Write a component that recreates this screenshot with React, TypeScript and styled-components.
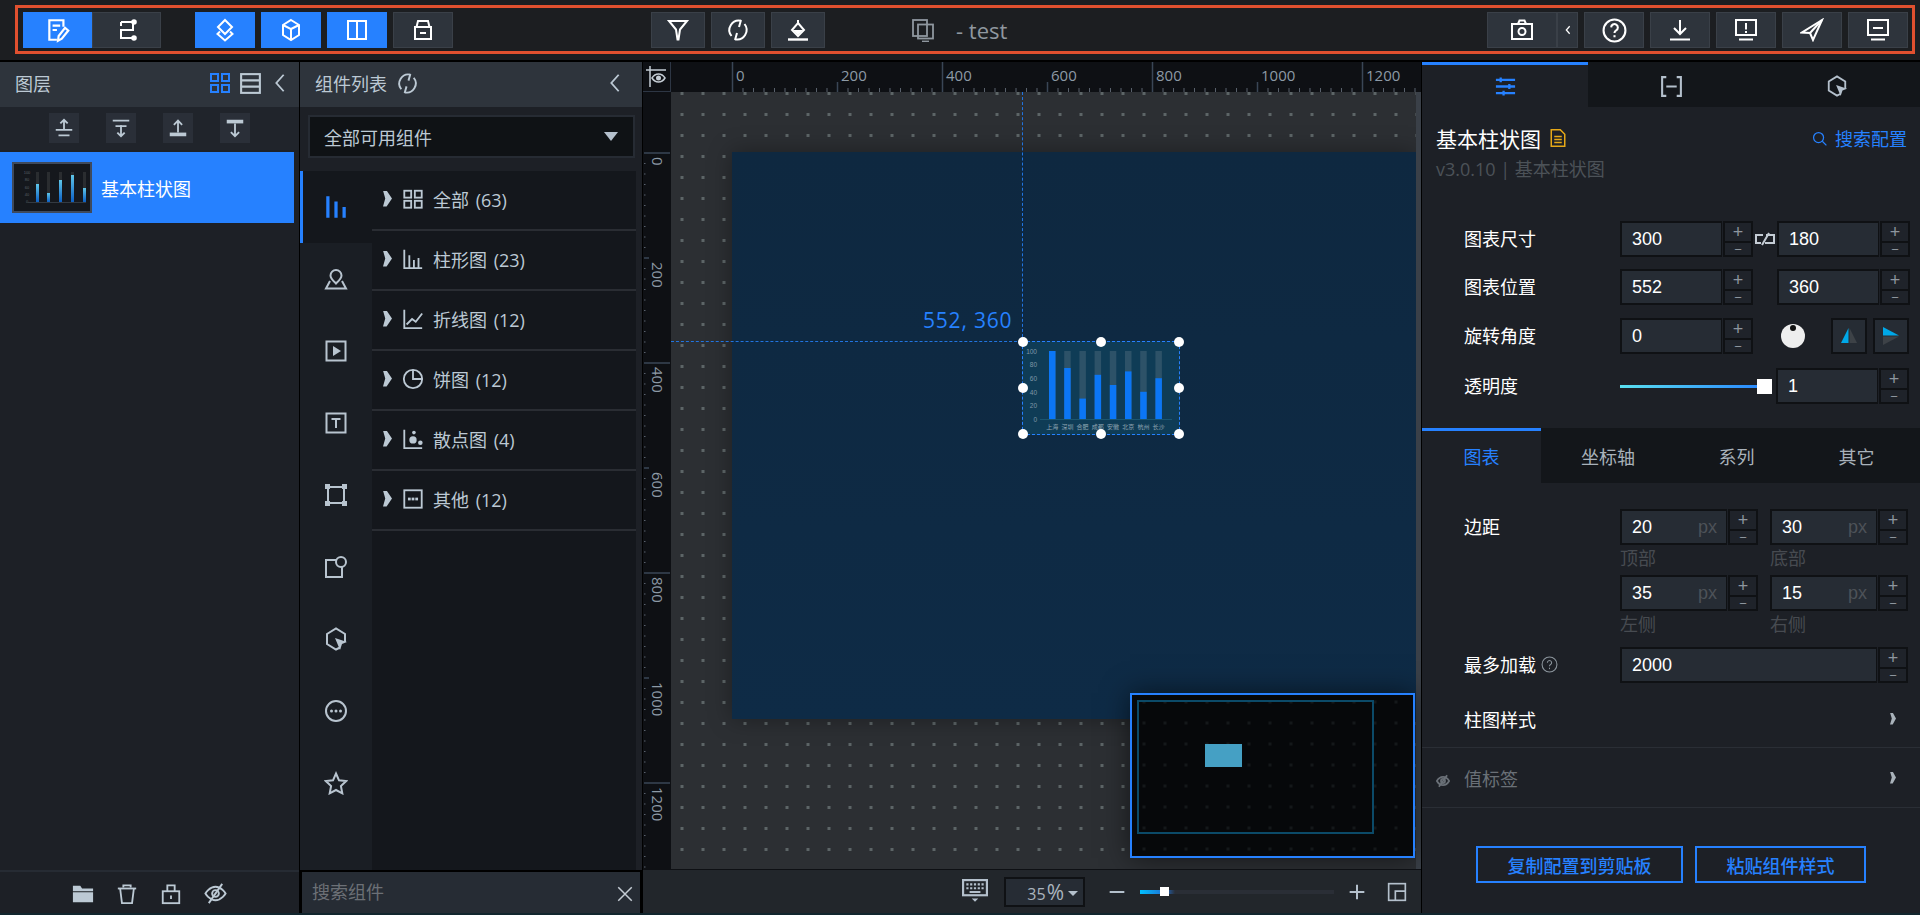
import React from 'react';
import styled, { createGlobalStyle } from 'styled-components';

const GlobalStyle = createGlobalStyle`
  html, body { margin: 0; padding: 0; width: 1920px; height: 915px; overflow: hidden; background: #000; }
  #root { width: 1920px; height: 915px; }
  * { box-sizing: border-box; }
`;

const BLUE = '#2681ff';
const FONT = `"Open Sans", "Noto Sans CJK SC", sans-serif`;
const NUM = `"Liberation Sans", "Noto Sans CJK SC", sans-serif`;

/* ---------- icon ---------- */
const Svg = styled.svg<{ $w: number; $h?: number; $c?: string; $sw?: number }>`
  display: block;
  flex: none;
  width: ${p => p.$w}px;
  height: ${p => p.$h ?? p.$w}px;
  color: ${p => p.$c ?? 'currentColor'};
  fill: none;
  stroke: currentColor;
  stroke-width: ${p => p.$sw ?? 2};
`;

const icons: Record<string, React.ReactNode> = {
  edit: <><path d="M17 9V3H4v18h7" /><path d="M7 8h7M7 12h4" /><path d="M12 22l.6-4.500L18.500 10l3 2.500-6 7.500z" /></>,
  flow: <><path d="M6 4h12v8H6v8h12" /><circle cx="19" cy="4" r="1.800" fill="currentColor" /><circle cx="19" cy="20" r="1.800" fill="currentColor" /><path d="M6 4v4" /></>,
  layers: <><path d="M12 2l7 7-7 7-7-7z" /><path d="M7 13.500L4.500 16 12 22.500l7.500-6.500-2.500-2.500" /></>,
  cube: <><path d="M12 2l8 5v10l-8 5-8-5V7z" /><path d="M4 7l8 4v11M12 11l8-4" /></>,
  panel: <><rect x="3" y="3" width="18" height="18" /><path d="M12 3v18" /></>,
  archive: <><path d="M7 3h10l1.500 6H5.500z" /><path d="M4 9h16v12H4z" /><path d="M9 15h6" /></>,
  funnel: <path d="M3 3h18l-7 8.500-1.500 10h-1L10 11.500z" />,
  refresh: <><path d="M5.500 18A9.500 9.500 0 0 1 15 2.800" /><path d="M18.500 6A9.500 9.500 0 0 1 9 21.200" /><path d="M15 2l-2 7M9 22l2-7" /></>,
  bucket: <><path d="M12 2v3M12 5l6 7-6 6-6-6z" /><path fill="currentColor" stroke="none" d="M7 12h10l-5 5z" /><path d="M2 21.500h20" strokeWidth="2.400" /></>,
  devices: <><rect x="2" y="2" width="14" height="16" /><rect x="7" y="6.500" width="15" height="14" /><path d="M11 23.500h7" /></>,
  camera: <><path d="M8 6l1.500-3.500h5L16 6" /><rect x="2" y="6" width="20" height="15" /><circle cx="12" cy="13.500" r="3.500" /></>,
  help: <><circle cx="12" cy="12" r="10.500" /><path d="M8.800 9a3.200 3.200 0 1 1 4.800 2.800c-1 .6-1.600 1.300-1.600 2.600" /><path d="M12 16.500v2" /></>,
  download: <><path d="M12 2v14M6 10l6 6 6-6" /><path d="M2 21.500h20" /></>,
  screenAlert: <><rect x="2" y="2" width="20" height="15" /><path d="M12 5v6.500M12 13v2" /><path d="M5 21.500h14" /></>,
  send: <><path d="M22 2L2 14.500l8 .5 3 7z" /><path d="M22 2L10 15" /></>,
  screenMinus: <><rect x="2" y="2" width="20" height="15" /><path d="M7 10h10" /><path d="M5 21.500h14" /></>,
  grid4: <><rect x="3" y="3" width="7" height="7" /><rect x="14" y="3" width="7" height="7" /><rect x="3" y="14" width="7" height="7" /><rect x="14" y="14" width="7" height="7" /></>,
  list3: <><rect x="3" y="3" width="18" height="18" /><path d="M3 9h18M3 15h18" /></>,
  chevLeft: <path d="M16 3l-8 9 8 9" />,
  moveUp: <><path d="M12 14V3M8 7l4-4 4 4" /><path d="M3 14h18M6 20h12" /></>,
  moveDown: <><path d="M3 4h18M6 10h12" /><path d="M12 9v12M8 17l4 4 4-4" /></>,
  toTop: <><path d="M12 17V4M7.500 8.500L12 4l4.500 4.500" /><path d="M3 19h18" strokeWidth="4" /></>,
  toBottom: <><path d="M3 5h18" strokeWidth="4" /><path d="M12 7v14M7.500 16.500L12 21l4.500-4.500" /></>,
  bars: <path stroke="none" fill="currentColor" d="M3 2h3v20H3zM10.500 7h3v15h-3zM18 12h3v10h-3z" />,
  pin: <><path d="M12 3a5.500 5.500 0 0 0-5.500 5.500c0 3 3 5.500 5.500 8 2.500-2.500 5.500-5 5.500-8A5.500 5.500 0 0 0 12 3z" /><path d="M6 14l-4 7.500h20l-4-7.500" /></>,
  play: <><rect x="2.500" y="2.500" width="19" height="19" /><path stroke="none" fill="currentColor" d="M9 7l8 5-8 5z" /></>,
  textBox: <><rect x="2.500" y="2.500" width="19" height="19" /><path d="M7.500 8h9M12 8v9" /></>,
  bounds: <><path d="M6 4h12M6 20h12M4 6v12M20 6v12" /><g stroke="none" fill="currentColor"><rect x="1" y="1" width="5" height="5" /><rect x="18" y="1" width="5" height="5" /><rect x="1" y="18" width="5" height="5" /><rect x="18" y="18" width="5" height="5" /></g></>,
  shapes: <><rect x="2" y="5" width="16" height="17" /><circle cx="17" cy="7" r="5" fill="#1a1e24" /></>,
  hexPointer: <><path d="M16 20.500l-4 2-9-5.500V7l9-5.500L21 7v8" /><path fill="currentColor" stroke="none" d="M11 11l12 4-5 2-2 6z" /></>,
  dots: <><circle cx="12" cy="12" r="10" /><g stroke="none" fill="currentColor"><circle cx="7.500" cy="12" r="1.500" /><circle cx="12" cy="12" r="1.500" /><circle cx="16.500" cy="12" r="1.500" /></g></>,
  star: <path d="M12 2.500l3 6.800 7.200.8-5.300 4.900 1.400 7.300L12 19l-6.300 3.300 1.400-7.300L1.800 10.100 9 9.300z" />,
  all: <><rect x="2.500" y="3" width="7.500" height="7.500" /><rect x="14" y="3" width="7.500" height="7.500" /><rect x="2.500" y="14" width="7.500" height="7.500" /><rect x="14" y="14" width="7.500" height="7.500" /></>,
  barChart: <><path d="M2.500 2v20h19.500" /><path d="M8 8v14M13 13v9M18 11v11" /></>,
  lineChart: <><path d="M2.500 2v20h19.500" /><path d="M5 18l6-6 4 3 7-9" /></>,
  pie: <><circle cx="12" cy="12" r="10" /><path d="M12 2v10h10" /></>,
  scatter: <><path d="M2.500 2v20h19.500" /><g stroke="none" fill="currentColor"><circle cx="12" cy="13" r="4" /><circle cx="20" cy="16" r="2.500" /><circle cx="13" cy="5" r="2" /></g></>,
  other: <><rect x="2.500" y="2.500" width="19" height="19" /><g stroke="none" fill="currentColor"><rect x="6.500" y="10.500" width="3" height="3" /><rect x="10.500" y="10.500" width="3" height="3" /><rect x="14.500" y="10.500" width="3" height="3" /></g></>,
  folder: <path stroke="none" fill="currentColor" d="M1 3h8l2 3h12v3H1zM1 10h22v11H1z" />,
  trash: <><path d="M2 6h20" /><path d="M8 5V2.500h8V5" /><path d="M4.500 6l2 16h11l2-16" /></>,
  lock: <><path d="M8 9V2.500h8V9" /><rect x="3" y="9" width="18" height="13" /><path d="M12 13.500v4" /></>,
  eyeOff: <><path d="M1.500 12s4-7 10.500-7 10.500 7 10.500 7-4 7-10.500 7S1.500 12 1.500 12z" /><circle cx="12" cy="12" r="3.500" /><path d="M5 22L19 2" /></>,
  close: <path d="M3 3l18 18M21 3L3 21" />,
  search: <><circle cx="10.500" cy="10.500" r="8" /><path d="M16.500 16.500L23 23" /></>,
  doc: <><path d="M3 1h12l6 6v16H3z" /><path d="M7 10h10M7 14h10M7 18h10" /></>,
  keyboard: <><rect x="1" y="1" width="22" height="14" /><path stroke="none" fill="currentColor" d="M4 4h2v2H4zM7.500 4h2v2h-2zM11 4h2v2h-2zM14.500 4h2v2h-2zM18 4h2v2h-2zM4 7.500h2v2H4zM7.500 7.500h2v2h-2zM11 7.500h2v2h-2zM14.500 7.500h2v2h-2zM18 7.500h2v2h-2zM7 11h10v2H7zM9 18h6l-3 3z" /></>,
  layout: <><rect x="2" y="2" width="20" height="20" /><path d="M10 22V11h12" /></>,
  questionSmall: <><circle cx="12" cy="12" r="10.500" /><path d="M9 9.500a3 3 0 1 1 4.500 2.600c-1 .6-1.500 1.200-1.500 2.400" /><path d="M12 16.500v2" /></>,
  sliders: <path d="M2 5h20M2 12h20M2 19h20M7 2.500v5M16 9.500v5M10 16.500v5" strokeWidth="2.400" />,
  bracket: <path d="M7 3H3v18h4M17 3h4v18h-4M7 12h10" />,
  rulerEye: <><path d="M1 5h20M5 1v21" strokeWidth="1.500" /><path d="M7 13s2.500-4 6.500-4 6.500 4 6.500 4-2.500 4-6.500 4S7 13 7 13z" strokeWidth="1.500" /><circle cx="13.500" cy="13" r="1.500" fill="currentColor" /></>,
  minus: <path d="M1 12h22" />,
  plus: <path d="M1 12h22M12 1v22" />,
};

const Icon = ({ n, s = 24, h, c, w }: { n: string; s?: number; h?: number; c?: string; w?: number }) => (
  <Svg $w={s} $h={h} $c={c} $sw={w} viewBox="0 0 24 24" preserveAspectRatio="xMidYMid meet">{icons[n]}</Svg>
);

/* ---------- page ---------- */
const Page = styled.div`
  width: 1920px;
  height: 915px;
  display: flex;
  flex-direction: column;
  font-family: ${FONT};
  background: #000;
`;

/* ---------- header ---------- */
const HeaderBar = styled.header`
  height: 60px;
  flex: none;
  background: #1c1e21;
  padding: 5px 5px 6px 15px;
`;
const HeaderFrame = styled.div`
  height: 49px;
  border: 3px solid #e0502f;
  padding: 1px 4px 0 5px;
  display: flex;
  align-items: center;
`;
const HGroup = styled.div<{ $ml?: number; $gap?: number }>`
  display: flex;
  gap: ${p => p.$gap ?? 6}px;
  margin-left: ${p => p.$ml ?? 0}px;
`;
const HBtn = styled.button<{ $w?: number; $on?: boolean }>`
  width: ${p => p.$w ?? 60}px;
  height: 36px;
  padding: 0;
  display: flex;
  align-items: center;
  justify-content: center;
  color: #fff;
  background: ${p => (p.$on ? BLUE : '#2e343c')};
  border: 1px solid ${p => (p.$on ? BLUE : '#3a4048')};
`;
const Segment = styled.div`
  display: flex;
`;
const ProjectTitle = styled.div`
  display: flex;
  align-items: center;
  margin-left: 86px;
  color: #8f979f;
  font-size: 22px;
  gap: 21px;
  flex: 1;
`;

/* ---------- body ---------- */
const Body = styled.div`
  flex: none;
  height: 851px;
  margin-top: 2px;
  display: flex;
  background: #000;
`;
const BottomStrip = styled.div`
  height: 2px;
  background: #12262e;
`;

const PanelHead = styled.div`
  height: 45px;
  flex: none;
  background: #2e343c;
  color: #bcc9d4;
  font-size: 18px;
  display: flex;
  align-items: center;
  padding-bottom: 3px;
`;

/* left */
const LayerPanel = styled.aside`
  width: 299px;
  flex: none;
  display: flex;
  flex-direction: column;
  background: #1d2026;
`;
const LayerHead = styled(PanelHead)`
  padding-left: 15px;
  padding-right: 8px;
`;
const HeadTitle = styled.span`
  flex: 1;
`;
const HeadIcons = styled.div`
  display: flex;
  align-items: center;
  gap: 6px;
`;
const LayerTools = styled.div`
  height: 43px;
  flex: none;
  background: #20242b;
  display: flex;
  justify-content: center;
  padding: 6px 0 0 0;
  gap: 27px;
`;
const LayerTool = styled.div`
  width: 30px;
  height: 30px;
  background: #2a2f38;
  color: #bcc9d4;
  display: flex;
  align-items: center;
  justify-content: center;
`;
const LayerList = styled.div`
  flex: 1;
  padding: 2px 5px 0 0;
`;
const LayerItem = styled.div`
  height: 71px;
  background: ${BLUE};
  display: flex;
  align-items: center;
  padding-left: 12px;
  gap: 9px;
  color: #fff;
  font-size: 18px;
`;
const Thumb = styled.svg`
  width: 80px;
  height: 51px;
  display: block;
  border: 2px solid #3f4a5c;
  background: #15181d;
`;
const LayerFoot = styled.div`
  height: 43px;
  flex: none;
  border-top: 2px solid #262b33;
  display: flex;
  align-items: center;
  justify-content: center;
  gap: 22px;
  color: #bcc9d4;
  padding-top: 2px;
`;

/* middle */
const ComPanel = styled.section`
  width: 342px;
  margin-left: 1px;
  flex: none;
  display: flex;
  flex-direction: column;
  background: #1d2026;
`;
const ComHead = styled(PanelHead)`
  padding-left: 15px;
  padding-right: 16px;
  gap: 9px;
`;
const SelectBox = styled.div`
  height: 43px;
  margin: 8px 7px 13px 8px;
  flex: none;
  background: #0f1215;
  border: 2px solid #262b33;
  color: #bcc9d4;
  font-size: 18px;
  display: flex;
  align-items: center;
  justify-content: space-between;
  padding: 0 15px 0 14px;
`;
const Caret = styled.i`
  width: 0;
  height: 0;
  border-left: 7px solid transparent;
  border-right: 7px solid transparent;
  border-top: 9px solid #b4c0cc;
`;
const ComBody = styled.div`
  height: 699px;
  flex: none;
  display: flex;
  padding-right: 6px;
`;
const SideCol = styled.div`
  width: 72px;
  flex: none;
  background: #1a1e24;
  color: #b8c4cf;
`;
const SideTab = styled.div<{ $on?: boolean }>`
  height: 72px;
  display: flex;
  align-items: center;
  justify-content: center;
  color: ${p => (p.$on ? BLUE : 'inherit')};
  background: ${p => (p.$on ? '#14171c' : 'transparent')};
  border-left: 3px solid ${p => (p.$on ? BLUE : 'transparent')};
  padding-right: 3px;
`;
const CatList = styled.div`
  flex: 1;
  background: #14171c;
`;
const CatRow = styled.div`
  height: 60px;
  border-bottom: 2px solid #2a2d33;
  display: flex;
  align-items: center;
  color: #bcc9d4;
  font-size: 18px;
  word-spacing: 2px;
  padding: 0 0 3px 11px;
`;
const CatIcon = styled.span`
  margin: 0 9px 0 10px;
  color: #bcc9d4;
`;
const SearchWrap = styled.div`
  height: 43px;
  flex: none;
  background: #000;
  padding: 2px 2px 0 2px;
`;
const SearchBox = styled.div`
  height: 41px;
  background: #262c34;
  color: #6c7076;
  font-size: 18px;
  display: flex;
  align-items: center;
  justify-content: space-between;
  padding: 0 6px 0 10px;
`;
const SearchText = styled.span`
  margin-top: -3px;
`;
const SearchClose = styled.span`
  margin-top: 3px;
`;

/* canvas column */
const Workspace = styled.main`
  width: 778px;
  flex: none;
  margin-left: 1px;
  display: flex;
  flex-direction: column;
  background: #0e1014;
`;
const RulerRow = styled.div`
  height: 30px;
  flex: none;
  display: flex;
`;
const RulerCorner = styled.div`
  width: 28px;
  flex: none;
  border-right: 1px solid #2d3644;
  border-bottom: 1px solid #2d3644;
  color: #c4ccd4;
  display: flex;
  align-items: center;
  justify-content: center;
`;
const CanvasRow = styled.div`
  flex: 1;
  min-height: 0;
  display: flex;
`;
const RulerSvg = styled.svg`
  display: block;
  flex: none;
  background: #0e1014;
  font-family: "Open Sans", sans-serif;
`;
const Canvas = styled.div`
  position: relative;
  width: 750px;
  flex: none;
  overflow: hidden;
  background-color: #2c2f33;
  background-image: radial-gradient(circle, #5d6567 1.5px, transparent 1.8px);
  background-size: 21px 21px;
  background-position: 0.5px -9px;
  padding: 60px 0 0 61px;
`;
const Stage = styled.div`
  width: 684px;
  height: 567px;
  background: linear-gradient(180deg, #0e2840 0%, #0e2b46 100%);
  box-shadow: 0 0 22px rgba(0, 0, 0, 0.35);
`;
const ScrollBar = styled.div`
  position: absolute;
  top: 0;
  bottom: 0;
  right: 0;
  width: 5px;
  background: #3a4048;
`;
const GuideV = styled.div`
  position: absolute;
  left: 351px;
  top: 0;
  height: 250px;
  border-left: 1px dashed #2174e0;
`;
const GuideH = styled.div`
  position: absolute;
  left: 0;
  top: 249px;
  width: 351px;
  border-top: 1px dashed #2174e0;
`;
const CoordLabel = styled.div`
  position: absolute;
  left: 252px;
  top: 214px;
  color: ${BLUE};
  font-size: 21px;
  letter-spacing: 0.8px;
  line-height: 28px;
  white-space: nowrap;
`;
const Selection = styled.div`
  position: absolute;
  left: 351px;
  top: 249px;
  width: 158px;
  height: 94px;
  background: #0f3c56;
  border: 1px dashed ${BLUE};
`;
const ChartSvg = styled.svg`
  position: absolute;
  left: -1px;
  top: -1px;
  width: 157px;
  height: 94px;
  font-family: "Liberation Sans", "Noto Sans CJK SC", sans-serif;
`;
const Handle = styled.i<{ $x: number; $y: number }>`
  position: absolute;
  left: ${p => p.$x}%;
  top: ${p => p.$y}%;
  width: 10px;
  height: 10px;
  margin: -5px 0 0 -5px;
  border-radius: 50%;
  background: #fff;
`;
const MiniMap = styled.div`
  position: absolute;
  right: 6px;
  bottom: 11px;
  width: 285px;
  height: 165px;
  border: 2px solid ${BLUE};
  background-color: #06080a;
  background-image: radial-gradient(circle, #14181a 1.5px, transparent 1.8px);
  background-size: 21px 21px;
  background-position: 1.5px -3.5px;
  padding: 5px;
  box-shadow: 0 0 26px rgba(0, 0, 0, 0.55);
`;
const MiniStage = styled.div`
  position: relative;
  width: 237px;
  height: 134px;
  border: 2px solid #0b4a68;
`;
const MiniBlock = styled.div`
  position: absolute;
  left: 66px;
  top: 42px;
  width: 37px;
  height: 23px;
  background: #45a0c4;
`;
const ZoomBar = styled.div`
  height: 43px;
  flex: none;
  margin-top: 1px;
  background: #22262b;
  color: #b4c0cc;
  display: flex;
  align-items: center;
  padding-left: 319px;
`;
const ZoomInput = styled.div`
  width: 81px;
  height: 30px;
  margin-left: 16px;
  margin-right: 24px;
  border: 2px solid #0f1114;
  background: #262c34;
  display: flex;
  align-items: center;
  justify-content: flex-end;
  padding-right: 5px;
  color: #aab4be;
  font-size: 16px;
  gap: 4px;
`;
const Pct = styled.span`
  font-size: 21px;
  margin-left: 1px;
`;
const MiniCaret = styled.i`
  width: 0;
  height: 0;
  margin-top: 3px;
  border-left: 5px solid transparent;
  border-right: 5px solid transparent;
  border-top: 5px solid #b4c0cc;
`;
const ZoomTrack = styled.div`
  position: relative;
  width: 194px;
  height: 4px;
  margin: 0 15px;
  background: #2a2e36;
`;
const ZoomFill = styled.div`
  position: absolute;
  inset: 0 auto 0 0;
  width: 35px;
  background: linear-gradient(90deg, #00c0ff, #1f6fd0 70%, transparent);
`;
const ZoomKnob = styled.i`
  position: absolute;
  left: 20px;
  top: -3px;
  width: 9px;
  height: 9px;
  background: #fff;
`;
const LayoutBtn = styled.span`
  margin-left: 22px;
`;

/* right */
const ConfigPanel = styled.aside`
  width: 498px;
  margin-left: 1px;
  flex: none;
  background: #1d2026;
  display: flex;
  flex-direction: column;
`;
const IconTabs = styled.div`
  display: flex;
  height: 45px;
  flex: none;
  background: #13161a;
`;
const IconTab = styled.div<{ $on?: boolean }>`
  flex: 1;
  display: flex;
  align-items: center;
  justify-content: center;
  color: ${p => (p.$on ? BLUE : '#b4c0cc')};
  background: ${p => (p.$on ? '#1d2026' : 'transparent')};
  border-top: 3px solid ${p => (p.$on ? BLUE : 'transparent')};
`;
const TitleBlock = styled.div`
  height: 114px;
  flex: none;
  padding: 16px 13px 0 14px;
`;
const TitleRow = styled.div`
  display: flex;
  align-items: center;
  justify-content: space-between;
  height: 30px;
`;
const TitleMain = styled.div`
  display: flex;
  align-items: center;
  gap: 8px;
  color: #fff;
  font-size: 21px;
`;
const SearchCfg = styled.div`
  display: flex;
  align-items: center;
  gap: 8px;
  color: ${BLUE};
  font-size: 18px;
`;
const Subtitle = styled.div`
  color: #4c5258;
  font-size: 18px;
  line-height: 26px;
  margin-top: 3px;
`;
const FormRow = styled.div<{ $mt?: number; $h?: number }>`
  display: flex;
  align-items: center;
  height: ${p => p.$h ?? 36}px;
  margin-top: ${p => p.$mt ?? 0}px;
  padding-left: 42px;
`;
const Label = styled.div`
  width: 156px;
  flex: none;
  color: #fff;
  font-size: 18px;
  display: flex;
  align-items: center;
  gap: 5px;
  padding-bottom: 2px;
`;
const FieldWrap = styled.div`
  display: flex;
  height: 36px;
  flex: none;
`;
const FieldInput = styled.div<{ $w: number }>`
  width: ${p => p.$w}px;
  height: 36px;
  border: 2px solid #0f1114;
  border-right-width: 1px;
  background: #262c34;
  color: #fff;
  font-family: ${NUM};
  font-size: 18px;
  display: flex;
  align-items: center;
  justify-content: space-between;
  padding: 0 9px 0 10px;
`;
const Unit = styled.span`
  color: #4d5258;
`;
const Stepper = styled.div`
  width: 30px;
  height: 36px;
  border: 2px solid #0f1114;
  background: #1f232a;
  display: grid;
  grid-template-rows: 1fr 1fr;
  color: #8d969e;
  font-family: ${NUM};
  margin-left: 1px;
`;
const StepCell = styled.div<{ $small?: boolean }>`
  display: flex;
  align-items: center;
  justify-content: center;
  font-size: ${p => (p.$small ? 13 : 18)}px;
  line-height: 1;
  & + & { border-top: 2px solid #0f1114; }
`;
const LinkSlot = styled.div`
  width: 24px;
  flex: none;
  display: flex;
  justify-content: center;
  color: #c4ccd4;
`;
const Knob = styled.div`
  position: relative;
  width: 24px;
  height: 24px;
  margin: 0 26px 0 28px;
  border-radius: 50%;
  background: #eee;
`;
const KnobDot = styled.i`
  position: absolute;
  left: 9px;
  top: 1px;
  width: 6px;
  height: 6px;
  border-radius: 50%;
  background: #111;
`;
const FlipBtn = styled.div`
  width: 36px;
  height: 36px;
  border: 2px solid #0f1114;
  background: #262c34;
  display: flex;
  align-items: center;
  justify-content: center;
  margin-right: 6px;
`;
const FlipSvg = styled.svg`
  display: block;
  width: 20px;
  height: 20px;
`;
const Slider = styled.div`
  position: relative;
  width: 152px;
  height: 3px;
  margin-right: 4px;
  flex: none;
  background: linear-gradient(90deg, #5ae0f0, ${BLUE});
`;
const SliderKnob = styled.i`
  position: absolute;
  right: 0;
  top: -6px;
  width: 15px;
  height: 15px;
  background: #fff;
`;
const TextTabs = styled.div`
  display: flex;
  height: 55px;
  margin-top: 24px;
  flex: none;
  background: #13161a;
`;
const TextTab = styled.div<{ $w: number; $on?: boolean }>`
  width: ${p => p.$w}px;
  flex: none;
  display: flex;
  align-items: center;
  justify-content: center;
  font-size: 18px;
  padding-bottom: 2px;
  color: ${p => (p.$on ? BLUE : '#a9b2ba')};
  background: ${p => (p.$on ? '#1d2026' : 'transparent')};
  border-top: 3px solid ${p => (p.$on ? BLUE : 'transparent')};
`;
const PairGrid = styled.div`
  display: grid;
  grid-template-columns: 138px 138px;
  column-gap: 12px;
`;
const PairCell = styled.div``;
const Caption = styled.div`
  height: 30px;
  color: #474b51;
  font-size: 18px;
  line-height: 26px;
`;
const MarginBlock = styled.div`
  display: flex;
  align-items: flex-start;
  padding-left: 42px;
  margin-top: 26px;
  flex: none;
`;
const MarginLabel = styled(Label)`
  height: 36px;
`;
const FoldRow = styled.div<{ $muted?: boolean; $h: number; $pt?: number }>`
  position: relative;
  height: ${p => p.$h}px;
  flex: none;
  display: flex;
  align-items: center;
  justify-content: space-between;
  padding: ${p => p.$pt ?? 0}px 24px 0 42px;
  border-bottom: 1px solid #2a2e35;
  color: ${p => (p.$muted ? '#6a7077' : '#fff')};
  font-size: 18px;
`;
const MutedEye = styled.span`
  position: absolute;
  left: 14px;
  top: 26px;
  color: #6a7077;
`;
const Tri = styled.i`
  width: 6px;
  height: 12px;
  background: #a9b2ba;
  clip-path: polygon(0 0, 45% 0, 100% 50%, 45% 100%, 0 100%, 30% 50%);
`;
const CatTri = styled(Tri)`
  width: 9px;
  height: 16px;
  background: #bcc9d4;
  clip-path: polygon(0 0, 40% 0, 100% 50%, 40% 100%, 0 100%, 25% 50%);
`;
const ActionRow = styled.div`
  display: flex;
  gap: 12px;
  padding-left: 54px;
  margin-top: 38px;
`;
const ActionBtn = styled.button<{ $w: number }>`
  width: ${p => p.$w}px;
  height: 37px;
  padding: 0;
  background: transparent;
  border: 2px solid ${BLUE};
  color: ${BLUE};
  font-family: ${FONT};
  font-size: 18px;
  font-weight: 500;
`;

/* ---------- parts ---------- */
const Field = ({ v, w = 102, unit }: { v: string; w?: number; unit?: string }) => (
  <FieldWrap>
    <FieldInput $w={w}>{v}{unit && <Unit>{unit}</Unit>}</FieldInput>
    <Stepper>
      <StepCell>+</StepCell>
      <StepCell $small>−</StepCell>
    </Stepper>
  </FieldWrap>
);

const TopRuler = () => {
  const ticks = [] as React.ReactNode[];
  for (let i = 0; i < 72; i++) {
    const x = 61.5 + i * 10.5;
    const isMajor = i % 10 === 0;
    const isFull = i % 20 === 0;
    ticks.push(
      <line key={i} x1={x} x2={x} y1={isFull ? 0 : isMajor ? 20 : 26} y2={30} stroke={isMajor ? '#3a4656' : '#59616c'} strokeWidth={isMajor ? 1.500 : 1} />,
    );
  }
  const labels = [0, 200, 400, 600, 800, 1000, 1200];
  return (
    <RulerSvg width={750} height={30} viewBox="0 0 750 30">
      {ticks}
      {labels.map((l, i) => (
        <text key={l} x={65 + i * 105} y={19} fontSize="15" fill="#8d9aa6">{l}</text>
      ))}
    </RulerSvg>
  );
};

const LeftRuler = () => {
  const ticks = [] as React.ReactNode[];
  for (let i = 0; i < 72; i++) {
    const y = 61 + i * 10.5;
    const isMajor = i % 10 === 0;
    const isFull = i % 20 === 0;
    ticks.push(
      <line key={i} y1={y} y2={y} x1={1} x2={isFull ? 27 : isMajor ? 6 : 2.500} stroke={isMajor ? '#3a4656' : '#59616c'} strokeWidth={isMajor ? 1.500 : 1} />,
    );
  }
  const labels = [0, 200, 400, 600, 800, 1000, 1200];
  return (
    <RulerSvg width={28} height={777} viewBox="0 0 28 777">
      {ticks}
      {labels.map((l, i) => (
        <text key={l} transform={`translate(9 ${65 + i * 105}) rotate(90)`} fontSize="15" fill="#8d9aa6">{l}</text>
      ))}
    </RulerSvg>
  );
};

const cities = ['上海', '深圳', '合肥', '成都', '安徽', '北京', '杭州', '长沙'];
const values = [100, 75, 30, 65, 50, 70, 40, 60];
const handles = [[0, 0], [50, 0], [100, 0], [0, 50], [100, 50], [0, 100], [50, 100], [100, 100]];

const BarChart = () => (
  <ChartSvg viewBox="0 0 157 94">
    {[100, 80, 60, 40, 20, 0].map((t, i) => (
      <text key={t} x="15" y={12.500 + i * 13.7} fontSize="6.500" textAnchor="end" fill="#7f98a8">{t}</text>
    ))}
    <line x1="18" x2="150" y1="78.500" y2="78.500" stroke="#1a5570" />
    {values.map((v, i) => {
      const x = 27 + i * 15.2;
      const h = 68 * v / 100;
      return (
        <g key={cities[i]}>
          <rect x={x} y={10} width={6.500} height={68} fill="#2d5268" />
          <rect x={x} y={78 - h} width={6.500} height={h} fill="#0b76f5" />
          <text x={x + 3.200} y={88} fontSize="6" textAnchor="middle" fill="#8fa5b3">{cities[i]}</text>
        </g>
      );
    })}
  </ChartSvg>
);

const LayerThumb = () => {
  const xs = [33, 44, 56, 68, 80];
  const tops = [20, 29, 16, 11, 24];
  return (
    <Thumb viewBox="0 0 76 47">
      <defs>
        <linearGradient id="tb" x1="0" y1="0" x2="0" y2="1">
          <stop offset="0" stopColor="#5fc6e8" />
          <stop offset="1" stopColor="#0b5fc4" />
        </linearGradient>
      </defs>
      {['100', '80', '60', '40', '0'].map((t, i) => (
        <text key={t} x="13" y={10 + i * 7.300} fontSize="4" textAnchor="middle" fill="#5a6068" fontFamily="Liberation Sans">{t}</text>
      ))}
      {xs.map((x, i) => (
        <g key={x}>
          <rect x={x - 11} y={8} width={3} height={30} fill="#2a2d30" />
          <rect x={x - 11} y={tops[i]} width={3} height={38 - tops[i]} fill="url(#tb)" />
        </g>
      ))}
      <line x1="14" x2="72" y1="38.500" y2="38.500" stroke="#333a42" />
    </Thumb>
  );
};

const sideIcons = ['bars', 'pin', 'play', 'textBox', 'bounds', 'shapes', 'hexPointer', 'dots', 'star'];
const cats = [
  ['all', '全部 (63)'],
  ['barChart', '柱形图 (23)'],
  ['lineChart', '折线图 (12)'],
  ['pie', '饼图 (12)'],
  ['scatter', '散点图 (4)'],
  ['other', '其他 (12)'],
];

export default function App() {
  return (
    <Page>
      <GlobalStyle />
      <HeaderBar>
        <HeaderFrame>
          <Segment>
            <HBtn $w={69} $on><Icon n="edit" s={26} /></HBtn>
            <HBtn $w={69}><Icon n="flow" /></HBtn>
          </Segment>
          <HGroup $ml={34}>
            <HBtn $on><Icon n="layers" /></HBtn>
            <HBtn $on><Icon n="cube" /></HBtn>
            <HBtn $on><Icon n="panel" /></HBtn>
            <HBtn><Icon n="archive" /></HBtn>
          </HGroup>
          <HGroup $ml={198}>
            <HBtn $w={54}><Icon n="funnel" /></HBtn>
            <HBtn $w={54}><Icon n="refresh" /></HBtn>
            <HBtn $w={54}><Icon n="bucket" /></HBtn>
          </HGroup>
          <ProjectTitle>
            <Icon n="devices" c="#8f979f" w={1.800} />
            <span>- test</span>
          </ProjectTitle>
          <HGroup>
            <Segment>
              <HBtn $w={70}><Icon n="camera" /></HBtn>
              <HBtn $w={21}><Icon n="chevLeft" s={10} w={3} /></HBtn>
            </Segment>
            <HBtn><Icon n="help" s={25} /></HBtn>
            <HBtn><Icon n="download" /></HBtn>
            <HBtn><Icon n="screenAlert" /></HBtn>
            <HBtn><Icon n="send" /></HBtn>
            <HBtn><Icon n="screenMinus" /></HBtn>
          </HGroup>
        </HeaderFrame>
      </HeaderBar>

      <Body>
        <LayerPanel>
          <LayerHead>
            <HeadTitle>图层</HeadTitle>
            <HeadIcons>
              <Icon n="grid4" c={BLUE} />
              <Icon n="list3" s={25} c="#bcc9d4" />
              <Icon n="chevLeft" s={22} c="#bcc9d4" />
            </HeadIcons>
          </LayerHead>
          <LayerTools>
            <LayerTool><Icon n="moveUp" s={22} /></LayerTool>
            <LayerTool><Icon n="moveDown" s={22} /></LayerTool>
            <LayerTool><Icon n="toTop" s={22} /></LayerTool>
            <LayerTool><Icon n="toBottom" s={22} /></LayerTool>
          </LayerTools>
          <LayerList>
            <LayerItem>
              <LayerThumb />
              <span>基本柱状图</span>
            </LayerItem>
          </LayerList>
          <LayerFoot>
            <Icon n="folder" s={22} />
            <Icon n="trash" s={22} />
            <Icon n="lock" s={22} />
            <Icon n="eyeOff" s={23} />
          </LayerFoot>
        </LayerPanel>

        <ComPanel>
          <ComHead>
            <span>组件列表</span>
            <Icon n="refresh" s={23} c="#bcc9d4" />
            <HeadTitle />
            <Icon n="chevLeft" s={22} c="#bcc9d4" />
          </ComHead>
          <SelectBox>
            <span>全部可用组件</span>
            <Caret />
          </SelectBox>
          <ComBody>
            <SideCol>
              {sideIcons.map((n, i) => (
                <SideTab key={n} $on={i === 0}><Icon n={n} s={i === 0 ? 26 : 24} /></SideTab>
              ))}
            </SideCol>
            <CatList>
              {cats.map(([n, t]) => (
                <CatRow key={n}>
                  <CatTri />
                  <CatIcon><Icon n={n} s={22} /></CatIcon>
                  <span>{t}</span>
                </CatRow>
              ))}
            </CatList>
          </ComBody>
          <SearchWrap>
            <SearchBox>
              <SearchText>搜索组件</SearchText>
              <SearchClose><Icon n="close" s={18} c="#c4ccd4" /></SearchClose>
            </SearchBox>
          </SearchWrap>
        </ComPanel>

        <Workspace>
          <RulerRow>
            <RulerCorner>
              <Icon n="rulerEye" />
            </RulerCorner>
            <TopRuler />
          </RulerRow>
          <CanvasRow>
            <LeftRuler />
            <Canvas>
              <Stage />
              <GuideV />
              <GuideH />
              <CoordLabel>552, 360</CoordLabel>
              <Selection>
                <BarChart />
                {handles.map(([x, y]) => <Handle key={`${x}-${y}`} $x={x} $y={y} />)}
              </Selection>
              <ScrollBar />
              <MiniMap>
                <MiniStage><MiniBlock /></MiniStage>
              </MiniMap>
            </Canvas>
          </CanvasRow>
          <ZoomBar>
            <Icon n="keyboard" s={26} />
            <ZoomInput>
              <span>35<Pct>%</Pct></span>
              <MiniCaret />
            </ZoomInput>
            <Icon n="minus" s={16} w={3} />
            <ZoomTrack>
              <ZoomFill />
              <ZoomKnob />
            </ZoomTrack>
            <Icon n="plus" s={16} w={3} />
            <LayoutBtn><Icon n="layout" s={20} /></LayoutBtn>
          </ZoomBar>
        </Workspace>

        <ConfigPanel>
          <IconTabs>
            <IconTab $on><Icon n="sliders" s={23} /></IconTab>
            <IconTab><Icon n="bracket" s={25} /></IconTab>
            <IconTab><Icon n="hexPointer" s={22} /></IconTab>
          </IconTabs>
          <TitleBlock>
            <TitleRow>
              <TitleMain>
                <span>基本柱状图</span>
                <Icon n="doc" s={18} c="#e6a817" />
              </TitleMain>
              <SearchCfg>
                <Icon n="search" s={15} />
                <span>搜索配置</span>
              </SearchCfg>
            </TitleRow>
            <Subtitle>v3.0.10 | 基本柱状图</Subtitle>
          </TitleBlock>

          <FormRow>
            <Label>图表尺寸</Label>
            <Field v="300" />
            <LinkSlot>
              <svg width="20" height="14" viewBox="0 0 20 14" fill="none" stroke="currentColor" strokeWidth="2">
                <path d="M8 3H1v8h5M14 1L7 13M11 3h8v8h-9" />
              </svg>
            </LinkSlot>
            <Field v="180" />
          </FormRow>
          <FormRow $mt={12}>
            <Label>图表位置</Label>
            <Field v="552" />
            <LinkSlot />
            <Field v="360" />
          </FormRow>
          <FormRow $mt={13}>
            <Label>旋转角度</Label>
            <Field v="0" />
            <Knob><KnobDot /></Knob>
            <FlipBtn>
              <FlipSvg viewBox="0 0 20 20">
                <path d="M9.500 2v15H2z" fill="#00a8e8" />
                <path d="M10.500 2v15H18z" fill="#3d4247" />
              </FlipSvg>
            </FlipBtn>
            <FlipBtn>
              <FlipSvg viewBox="0 0 20 20">
                <path d="M2 1l16 8.500H2z" fill="#00a8e8" />
                <path d="M2 10.500h16L2 19z" fill="#3d4247" />
              </FlipSvg>
            </FlipBtn>
          </FormRow>
          <FormRow $mt={14}>
            <Label>透明度</Label>
            <Slider><SliderKnob /></Slider>
            <Field v="1" />
          </FormRow>

          <TextTabs>
            <TextTab $w={119} $on>图表</TextTab>
            <TextTab $w={134}>坐标轴</TextTab>
            <TextTab $w={123}>系列</TextTab>
            <TextTab $w={117}>其它</TextTab>
          </TextTabs>

          <MarginBlock>
            <MarginLabel>边距</MarginLabel>
            <PairGrid>
              <PairCell><Field v="20" w={107} unit="px" /><Caption>顶部</Caption></PairCell>
              <PairCell><Field v="30" w={107} unit="px" /><Caption>底部</Caption></PairCell>
              <PairCell><Field v="35" w={107} unit="px" /><Caption>左侧</Caption></PairCell>
              <PairCell><Field v="15" w={107} unit="px" /><Caption>右侧</Caption></PairCell>
            </PairGrid>
          </MarginBlock>
          <FormRow $mt={6}>
            <Label>最多加载 <Icon n="questionSmall" s={17} c="#8d969e" w={1.500} /></Label>
            <Field v="2000" w={257} />
          </FormRow>
          <FoldRow $h={65} $pt={7}>
            <span>柱图样式</span>
            <Tri />
          </FoldRow>
          <FoldRow $h={60} $muted>
            <MutedEye><Icon n="eyeOff" s={14} w={3} /></MutedEye>
            <span>值标签</span>
            <Tri />
          </FoldRow>
          <ActionRow>
            <ActionBtn $w={207}>复制配置到剪贴板</ActionBtn>
            <ActionBtn $w={171}>粘贴组件样式</ActionBtn>
          </ActionRow>
        </ConfigPanel>
      </Body>
      <BottomStrip />
    </Page>
  );
}
